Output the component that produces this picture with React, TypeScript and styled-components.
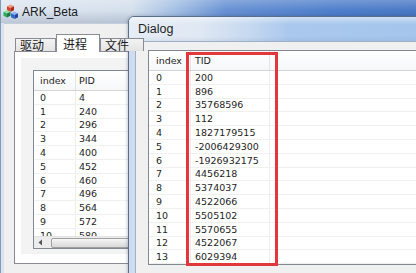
import React from "react";
import styled, { createGlobalStyle } from "styled-components";

const GlobalStyle = createGlobalStyle`
  html, body {
    margin: 0;
    padding: 0;
    background: #f0f0f0;
  }
  body {
    font-family: "DejaVu Sans", Verdana, sans-serif;
  }
  * {
    box-sizing: border-box;
  }
`;

const Desktop = styled.div`
  position: relative;
  width: 416px;
  height: 273px;
  overflow: hidden;
  background: #f0f0f0;
`;

/* main window */

const MainWindow = styled.div`
  position: absolute;
  left: 0;
  top: 0;
  width: 416px;
  height: 300px;
  display: flex;
  flex-direction: column;
  background: #d9e4f0;
  border-left: 1px solid #8399b8;
`;

const MainTitle = styled.div`
  flex: none;
  height: 23px;
  display: flex;
  align-items: center;
  gap: 3px;
  padding-left: 2px;
  background:
    linear-gradient(to bottom, rgba(255, 255, 255, 0.22), rgba(255, 255, 255, 0) 45%, rgba(0, 10, 50, 0.14)),
    linear-gradient(to right, #dde6f0 0, #d5e0ed 130px, #a3bfe4 175px, #6791d3 225px, #4f7fcb 330px, #4a79c4 100%);
  font-family: "Liberation Sans", Arial, sans-serif;
  font-size: 12px;
  color: #1b1b1b;
`;

const MainClient = styled.div`
  flex: 1;
  margin-left: 3px;
  padding: 10px 0 0 10px;
  background: #f0f0f0;
  border-top: 1px solid #c3cfdd;
`;

const TabRow = styled.div`
  display: flex;
  align-items: flex-end;
  height: 17px;
  padding-left: 1px;
`;

const Tab = styled.div<{ $active?: boolean; $w: number }>`
  position: relative;
  z-index: ${(p) => (p.$active ? 2 : 1)};
  width: ${(p) => p.$w}px;
  height: ${(p) => (p.$active ? 18 : 13)}px;
  margin-bottom: ${(p) => (p.$active ? -1 : 0)}px;
  display: flex;
  align-items: center;
  padding-left: ${(p) => (p.$active ? 6 : 4)}px;
  border: 1px solid #898c95;
  border-bottom: none;
  background: ${(p) => (p.$active ? "#ffffff" : "linear-gradient(to bottom, #f3f3f3, #e4e4e4)")};
  font-family: "Noto Sans CJK SC", sans-serif;
  font-size: 12px;
  line-height: 1;
  color: #1a1a1a;
  white-space: nowrap;
`;

const TabPanel = styled.div`
  height: 213px;
  border: 1px solid #898c95;
  background: #ffffff;
  padding: 6px;
`;

const TabPage = styled.div`
  height: 196px;
  background: #f3f3f3;
  padding: 12px 0 0 12px;
`;

/* list views */

const ListView = styled.div<{ $w: number; $h?: number }>`
  position: relative;
  width: ${(p) => p.$w}px;
  height: ${(p) => (p.$h ? `${p.$h}px` : "auto")};
  display: flex;
  flex-direction: column;
  border: 1px solid #828790;
  background: #ffffff;
`;

const Body = styled.div`
  flex: 1;
  overflow: hidden;
`;

const Row = styled.div<{ $cols: string; $header?: boolean }>`
  display: grid;
  grid-template-columns: ${(p) => p.$cols};
  height: ${(p) => (p.$header ? "20px" : "13.8px")};
  border-bottom: 1px solid ${(p) => (p.$header ? "#d5d5d5" : "#f0f0f0")};
  background: ${(p) => (p.$header ? "linear-gradient(to bottom, #ffffff, #f6f7f9)" : "transparent")};
  font-size: 9.5px;
  color: #1e1e1e;
`;

const Cell = styled.div<{ $pad: number; $header?: boolean; $last?: boolean }>`
  display: flex;
  align-items: center;
  padding-left: ${(p) => p.$pad}px;
  border-right: ${(p) => (p.$last ? "none" : `1px solid ${p.$header ? "#e3e4e6" : "#ececec"}`)};
  white-space: nowrap;
  overflow: hidden;
`;

const HScroll = styled.div`
  flex: none;
  height: 12px;
  display: flex;
  align-items: center;
  gap: 5px;
  background: #ececec;
  border-top: 1px solid #e2e2e2;
`;

const ScrollButton = styled.div`
  width: 12px;
  height: 11px;
  display: flex;
  align-items: center;
  justify-content: center;
`;

const ScrollThumb = styled.div`
  flex: 1;
  height: 10px;
  border: 1px solid #a0a0a0;
  border-radius: 2px;
  background: linear-gradient(to bottom, #f7f7f7, #e6e6e6 50%, #d9d9d9);
`;

const Highlight = styled.div`
  position: absolute;
  left: 37px;
  top: 1px;
  width: 92px;
  height: 214px;
  border: 3px solid #e2383b;
  z-index: 3;
  pointer-events: none;
`;

/* dialog */

const Dialog = styled.div`
  position: absolute;
  left: 128px;
  top: 16px;
  width: 300px;
  height: 270px;
  display: flex;
  flex-direction: column;
  border: 1px solid #5a6e8e;
  border-radius: 6px 0 0 0;
  background: linear-gradient(to right, #cfdcee 0, #d6e2f0 40px, #c3d7ef 120px, #a9c7ec 100%);
  box-shadow: -1px 0 3px rgba(40, 60, 90, 0.25);
`;

const DialogTitle = styled.div`
  flex: none;
  height: 24px;
  display: flex;
  align-items: center;
  padding-left: 9px;
  border-radius: 5px 0 0 0;
  background:
    linear-gradient(to bottom, rgba(255, 255, 255, 0.45), rgba(255, 255, 255, 0) 30%, rgba(255, 255, 255, 0) 80%, rgba(60, 90, 130, 0.08)),
    linear-gradient(to right, #e6edf6 0, #e0e8f3 70px, #c6d9f0 120px, #aac8ed 160px, #a6c5ec 100%);
  font-family: "Liberation Sans", Arial, sans-serif;
  font-size: 12.5px;
  color: #1e1e1e;
`;

const DialogClient = styled.div`
  flex: 1;
  margin-left: 6px;
  padding: 8px 0 0 12px;
  background: #f0f0f0;
  border-top: 1px solid #9fb0c6;
  border-left: 1px solid #9fb0c6;
`;

const ArkIcon = () => {
  const cube = (x: number, y: number, top: string, left: string, right: string) => (
    <g transform={`translate(${x} ${y})`}>
      <polygon points="3.5,0 7,1.8 3.5,3.6 0,1.8" fill={top} />
      <polygon points="0,1.8 3.5,3.6 3.5,7.6 0,5.8" fill={left} />
      <polygon points="3.5,3.6 7,1.8 7,5.8 3.5,7.6" fill={right} />
    </g>
  );
  return (
    <svg width="16" height="16" viewBox="0 0 16 16">
      {cube(4, 0.5, "#f59a7a", "#d8402a", "#a92a1c")}
      {cube(0.5, 6, "#8fe0a8", "#2fa85a", "#1d7a3e")}
      {cube(8, 7.5, "#8fb6f2", "#2f66cf", "#1f469a")}
    </svg>
  );
};

const pids = ["4", "240", "296", "344", "400", "452", "460", "496", "564", "572", "580"];

const tids = [
  "200",
  "896",
  "35768596",
  "112",
  "1827179515",
  "-2006429300",
  "-1926932175",
  "4456218",
  "5374037",
  "4522066",
  "5505102",
  "5570655",
  "4522067",
  "6029394",
];

const mainCols = "42px 60px 1fr";
const dialogCols = "42px 79px 1fr";

export default function App() {
  return (
    <Desktop>
      <GlobalStyle />
      <MainWindow>
        <MainTitle>
          <ArkIcon />
          <span>ARK_Beta</span>
        </MainTitle>
        <MainClient>
          <TabRow>
            <Tab $w={41}>驱动</Tab>
            <Tab $w={44} $active>
              进程
            </Tab>
            <Tab $w={44}>文件</Tab>
          </TabRow>
          <TabPanel>
            <TabPage>
              <ListView $w={200} $h={179}>
                <Row $cols={mainCols} $header>
                  <Cell $pad={6} $header>
                    index
                  </Cell>
                  <Cell $pad={3} $header>
                    PID
                  </Cell>
                  <Cell $pad={3} $header $last />
                </Row>
                <Body>
                  {pids.map((pid, i) => (
                    <Row $cols={mainCols} key={i}>
                      <Cell $pad={6}>{i}</Cell>
                      <Cell $pad={3}>{pid}</Cell>
                      <Cell $pad={3} $last />
                    </Row>
                  ))}
                </Body>
                <HScroll>
                  <ScrollButton>
                    <svg width="5" height="7" viewBox="0 0 5 7">
                      <polygon points="4,0.5 4,6.5 0.5,3.5" fill="#555" />
                    </svg>
                  </ScrollButton>
                  <ScrollThumb />
                </HScroll>
              </ListView>
            </TabPage>
          </TabPanel>
        </MainClient>
      </MainWindow>

      <Dialog>
        <DialogTitle>Dialog</DialogTitle>
        <DialogClient>
          <ListView $w={290}>
            <Row $cols={dialogCols} $header>
              <Cell $pad={7} $header>
                index
              </Cell>
              <Cell $pad={4} $header>
                TID
              </Cell>
              <Cell $pad={4} $header $last />
            </Row>
            {tids.map((tid, i) => (
              <Row $cols={dialogCols} key={i}>
                <Cell $pad={7}>{i}</Cell>
                <Cell $pad={4}>{tid}</Cell>
                <Cell $pad={4} $last />
              </Row>
            ))}
            <Highlight />
          </ListView>
        </DialogClient>
      </Dialog>
    </Desktop>
  );
}
